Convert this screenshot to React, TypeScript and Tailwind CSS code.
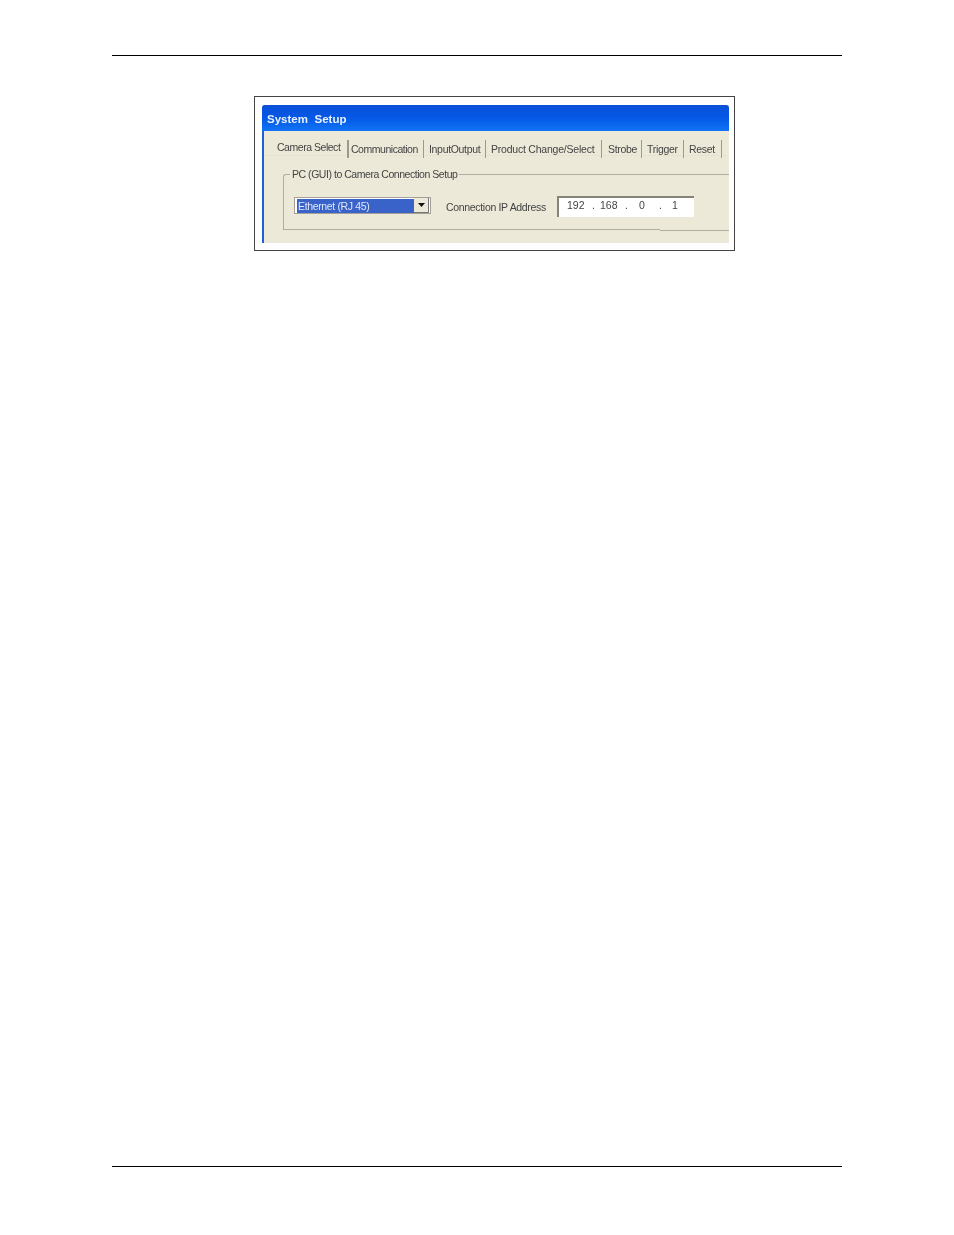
import React from 'react';

const tabs = [
  { label: 'Communication', width: 'w-[75px]', pad: 'pl-[2px] tracking-[-0.47px]' },
  { label: 'InputOutput', width: 'w-[62px]', pad: 'pl-[5px]' },
  { label: 'Product Change/Select', width: 'w-[116px]', pad: 'pl-[5px] tracking-[-0.22px]' },
  { label: 'Strobe', width: 'w-[40px]', pad: 'pl-[6px]' },
  { label: 'Trigger', width: 'w-[42px]', pad: 'pl-[5px]' },
  { label: 'Reset', width: 'w-[38px]', pad: 'pl-[5px]' },
];

const ipParts = [
  { text: '192', cls: 'w-[25px]' },
  { text: '.', cls: 'w-[8px]' },
  { text: '168', cls: 'w-[25px]' },
  { text: '.', cls: 'w-[14px]' },
  { text: '0', cls: 'w-[20px]' },
  { text: '.', cls: 'w-[13px]' },
  { text: '1', cls: 'w-[10px]' },
];

export default function App() {
  return (
    <div className="w-[954px] h-[1235px] bg-white px-[112px] pt-[55px] font-['Liberation_Sans',sans-serif]">
      {/* Page header rule */}
      <div className="h-px bg-black" />

      {/* Screenshot figure */}
      <div className="mt-[40px] ml-[142px] w-[481px] h-[155px] border-[1.5px] border-[#444] pt-[8px] pl-[7px] pr-[5px]">
        <div className="h-[138px] border-l-[2px] border-[#1f5fd8] bg-[#ece9d8] rounded-tl-[4px] text-[#444] blur-[0.35px]">
          {/* Title bar */}
          <div className="-ml-[2px] h-[26px] pt-[3px] rounded-t-[3px] bg-gradient-to-b from-[#0a50d8] via-[#0558e6] to-[#1274f4] flex items-center pl-[5px] text-[#e8f0ff] text-[11.5px] font-bold tracking-[0.02px] whitespace-pre">
            System  Setup
          </div>

          {/* Tabs */}
          <div className="flex h-[25px] pt-[9px] pl-[13px] text-[10.5px] tracking-[-0.32px] border-b border-[#e6e3d2]">
            <div className="w-[70px] -mt-[1px] whitespace-nowrap leading-[16px] tracking-[-0.47px]">Camera Select</div>
            <div className="w-[2px] h-[18px] bg-[#9a9a90]" />
            {tabs.map((tab) => (
              <div key={tab.label} className={`${tab.width} ${tab.pad} h-[18px] border-r-[1.5px] border-[#9a9a90] whitespace-nowrap leading-[18px]`}>
                {tab.label}
              </div>
            ))}
          </div>

          {/* Group box */}
          <fieldset className="ml-[19px] mt-[11px] h-[63px] border border-r-0 border-[#b0aea3] rounded-tl-[3px] pl-[10px]">
            <legend className="-ml-[4px] px-[2px] text-[10.5px] tracking-[-0.46px] leading-[14px]">
              PC (GUI) to Camera Connection Setup
            </legend>
            <div className="flex items-center mt-[13px] text-[10.5px]">
              <div className="w-[137px] h-[17px] border border-[#a3a097] bg-white flex items-center pl-[2px] pr-px">
                <div className="flex-1 h-[14px] bg-[#3a63c9] text-[#dfe6fa] text-[10.5px] leading-[14px] pl-px tracking-[-0.35px]">
                  Ethernet (RJ 45)
                </div>
                <div className="w-[15px] h-[15px] bg-[#ece9d8] border-r border-b border-[#777] flex items-center justify-center">
                  <svg width="7" height="4" viewBox="0 0 7 4">
                    <path d="M0 0h7L3.5 4z" fill="#111" />
                  </svg>
                </div>
              </div>
              <div className="ml-[15px] w-[111px] mt-[4px] whitespace-nowrap tracking-[-0.32px]">Connection IP Address</div>
              <div className="w-[137px] h-[21px] mt-[2px] bg-white border-t-2 border-l-2 border-[#85837a] flex items-center pl-[8px] pb-[4px]">
                {ipParts.map((part, i) => (
                  <span key={i} className={part.cls}>{part.text}</span>
                ))}
              </div>
            </div>
          </fieldset>
          {/* Lower edge of the group box steps down one pixel near the right */}
          <div className="ml-auto w-[69px] h-[2px] -mt-px bg-[#ece9d8] border-b border-[#b0aea3]" />
        </div>
      </div>

      {/* Page footer rule */}
      <div className="mt-[915px] h-px bg-black" />
    </div>
  );
}
